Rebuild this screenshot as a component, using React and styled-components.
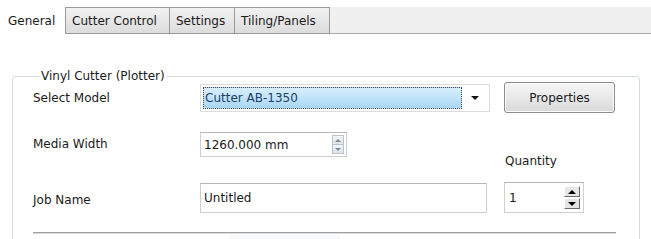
import React from "react";
import styled, { createGlobalStyle } from "styled-components";

const Global = createGlobalStyle`
  html, body { margin: 0; padding: 0; background: #fff; }
  body { font-family: "DejaVu Sans", Verdana, sans-serif; font-size: 12px; color: #1a1a1a; overflow: hidden; }
`;

const Page = styled.div`
  width: 651px;
  height: 239px;
  overflow: hidden;
  padding-top: 7px;
  box-sizing: border-box;
`;

const TabBar = styled.div`
  display: flex;
  height: 27px;
  background: linear-gradient(#ffffff 0 0) left / 65px 100% no-repeat, #f0f0f0;
  border-bottom: 1px solid #a8a8a8;
  box-sizing: border-box;
`;

const Tab = styled.div`
  display: flex;
  align-items: center;
  box-sizing: border-box;
  height: 27px;
  padding: 0 ${(p) => (p.$active ? "8px" : "6px")};
  width: ${(p) => p.$w}px;
  background: ${(p) => (p.$active ? "#fff" : "linear-gradient(#f2f2f2, #dcdcdc)")};
  border: ${(p) => (p.$active ? "none" : "1px solid #9a9a9a")};
  border-left: ${(p) => (p.$first ? "1px solid #9a9a9a" : "none")};
  ${(p) => p.$active && "border: none;"}
  font-size: 12px;
  color: #1a1a1a;
  white-space: nowrap;
`;

const Group = styled.fieldset`
  margin: 35px 0 0 12px;
  width: 628px;
  box-sizing: border-box;
  border: 1px solid #d4dde3;
  border-radius: 3px;
  padding: 0 23px 40px 20px;
  min-inline-size: 0;
`;

const Legend = styled.legend`
  margin-left: 7px;
  padding: 0 2px 0 1px;
  font-size: 12px;
  color: #1a1a1a;
`;

const Row = styled.div`
  display: flex;
  align-items: ${(p) => p.$align || "center"};
  height: ${(p) => p.$h}px;
  margin-top: ${(p) => p.$mt}px;
`;

const Label = styled.div`
  width: 167px;
  flex: none;
  font-size: 12px;
  padding-top: ${(p) => p.$pt || 0}px;
  line-height: ${(p) => p.$lh || "normal"};
`;

const Select = styled.div`
  width: 290px;
  height: 28px;
  box-sizing: border-box;
  border: 1px solid #dcdcdc;
  background: #fff;
  display: flex;
  align-items: center;
  padding: 2px;
  gap: 9px;
`;

const SelectValue = styled.div`
  flex: 1;
  height: 100%;
  box-sizing: border-box;
  border: 1px dotted #4a4a4a;
  background: linear-gradient(#d8eefc, #c2e3fa 50%, #a9d7f6);
  color: #1b3d6a;
  display: flex;
  align-items: center;
  padding-left: 1px;
  font-size: 12px;
`;

const Caret = styled.div`
  width: 0;
  height: 0;
  border-left: 4px solid transparent;
  border-right: 4px solid transparent;
  border-top: 4px solid #111;
  margin-right: 8px;
`;

const Button = styled.button`
  margin-left: 14px;
  width: 111px;
  height: 31px;
  border: 1px solid #8c8c8c;
  border-radius: 3px;
  background: linear-gradient(#f6f6f6, #e8e8e8 50%, #d9d9d9);
  box-shadow: inset 0 0 0 1px #fbfbfb;
  font-family: inherit;
  font-size: 12px;
  color: #1a1a1a;
  padding: 0;
`;

const Input = styled.div`
  width: ${(p) => p.$w}px;
  height: ${(p) => p.$h}px;
  box-sizing: border-box;
  border: 1px solid #cfcfcf;
  border-top-color: #b5b5b5;
  background: #fff;
  display: flex;
  align-items: center;
  padding-left: ${(p) => p.$pl || 3}px;
  font-size: 12px;
  color: #1a1a1a;
`;

const InputText = styled.span`
  flex: 1;
`;

const SmallSpin = styled.div`
  display: flex;
  flex-direction: column;
  width: 12px;
  height: 19px;
  margin-right: 2px;
  border: 1px solid #b8c4ce;
  box-sizing: border-box;
`;

const SmallSpinBtn = styled.div`
  flex: 1;
  display: flex;
  align-items: center;
  justify-content: center;
  background: linear-gradient(#f4f6f8, #dde3e8);
  & + & { border-top: 1px solid #b8c4ce; }
  &::after {
    content: "";
    border-left: 3px solid transparent;
    border-right: 3px solid transparent;
    ${(p) => (p.$up ? "border-bottom: 3px solid #7d8c9a;" : "border-top: 3px solid #7d8c9a;")}
  }
`;

const Quantity = styled.div`
  margin-left: auto;
  width: 111px;
  margin-bottom: 14px;
  font-size: 12px;
  align-self: flex-end;
`;

const Spacer = styled.div`
  width: 17px;
  flex: none;
`;

const BigSpin = styled.div`
  display: flex;
  flex-direction: column;
  width: 16px;
  height: 23px;
  margin-right: 3px;
  gap: 1px;
`;

const BigSpinBtn = styled.div`
  flex: 1;
  display: flex;
  align-items: center;
  justify-content: center;
  background: #e6e6e6;
  border-top: 1px solid #fff;
  border-left: 1px solid #fff;
  border-right: 1px solid #6a6a6a;
  border-bottom: 1px solid #6a6a6a;
  box-sizing: border-box;
  &::after {
    content: "";
    border-left: 4px solid transparent;
    border-right: 4px solid transparent;
    ${(p) => (p.$up ? "border-bottom: 4px solid #000;" : "border-top: 4px solid #000;")}
  }
`;

const Separator = styled.div`
  margin-top: 19px;
  height: 1px;
  background: #a0a0a0;
  border-bottom: 1px solid #dcdcdc;
`;

const Faint = styled.div`
  margin: 1px 0 0 197px;
  width: 110px;
  height: 8px;
  background: #f6f8fa;
`;

export default function App() {
  return (
    <>
      <Global />
      <Page>
        <TabBar>
          <Tab $active $w={65}>General</Tab>
          <Tab $first $w={105}>Cutter Control</Tab>
          <Tab $w={65}>Settings</Tab>
          <Tab $w={95}>Tiling/Panels</Tab>
        </TabBar>
        <Group>
          <Legend>Vinyl Cutter (Plotter)</Legend>
          <Row $h={31} $mt={-1}>
            <Label>Select Model</Label>
            <Select>
              <SelectValue>Cutter AB-1350</SelectValue>
              <Caret />
            </Select>
            <Button>Properties</Button>
          </Row>
          <Row $h={50} $mt={19} $align="flex-start">
            <Label $lh="25px">Media Width</Label>
            <Input $w={147} $h={25}>
              <InputText>1260.000 mm</InputText>
              <SmallSpin>
                <SmallSpinBtn $up />
                <SmallSpinBtn />
              </SmallSpin>
            </Input>
            <Quantity>Quantity</Quantity>
          </Row>
          <Row $h={31} $mt={0}>
            <Label $pt={4}>Job Name</Label>
            <Input $w={287} $h={30}>
              <InputText>Untitled</InputText>
            </Input>
            <Spacer />
            <Input $w={80} $h={31} $pl={4}>
              <InputText>1</InputText>
              <BigSpin>
                <BigSpinBtn $up />
                <BigSpinBtn />
              </BigSpin>
            </Input>
          </Row>
          <Separator />
          <Faint />
        </Group>
      </Page>
    </>
  );
}
